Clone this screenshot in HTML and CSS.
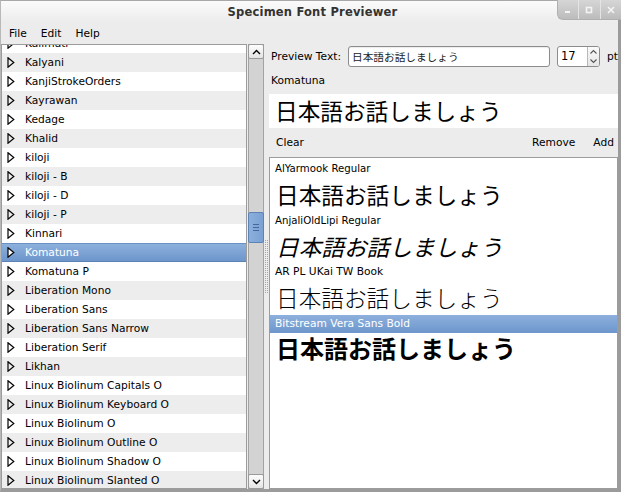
FILE: index.html
```html
<!DOCTYPE html>
<html>
<head>
<meta charset="utf-8">
<link rel="stylesheet" href="styles.css">
</head>
<body>
<div class="window">
  <div class="titlebar">
    <span class="title">Specimen Font Previewer</span>
    <div class="wm">
      <div class="wm-btn"><svg width="8" height="8" viewBox="0 0 8 8"><rect x="1" y="5" width="5" height="2" fill="#f4f4f4"/></svg></div>
      <div class="wm-btn"><svg width="8" height="8" viewBox="0 0 8 8"><rect x="1.5" y="1.5" width="5" height="5" fill="none" stroke="#f4f4f4" stroke-width="1.6"/></svg></div>
      <div class="wm-btn"><svg width="8" height="8" viewBox="0 0 8 8"><path d="M1 1L7 7M7 1L1 7" stroke="#f4f4f4" stroke-width="1.6"/></svg></div>
    </div>
  </div>
  <div class="menubar">
    <span class="menu">File</span><span class="menu">Edit</span><span class="menu">Help</span>
  </div>
  <div class="main">
    <div class="fontlist">
      <div class="rows">
        <div class="row"><svg class="tri" width="8" height="11" viewBox="0 0 8 11"><path d="M1 0.8L6.8 5.5L1 10.2Z" fill="none" stroke="#000" stroke-width="1.2"/></svg><span>Kalimati</span></div>
        <div class="row alt"><svg class="tri" width="8" height="11" viewBox="0 0 8 11"><path d="M1 0.8L6.8 5.5L1 10.2Z" fill="none" stroke="#000" stroke-width="1.2"/></svg><span>Kalyani</span></div>
        <div class="row"><svg class="tri" width="8" height="11" viewBox="0 0 8 11"><path d="M1 0.8L6.8 5.5L1 10.2Z" fill="none" stroke="#000" stroke-width="1.2"/></svg><span>KanjiStrokeOrders</span></div>
        <div class="row alt"><svg class="tri" width="8" height="11" viewBox="0 0 8 11"><path d="M1 0.8L6.8 5.5L1 10.2Z" fill="none" stroke="#000" stroke-width="1.2"/></svg><span>Kayrawan</span></div>
        <div class="row"><svg class="tri" width="8" height="11" viewBox="0 0 8 11"><path d="M1 0.8L6.8 5.5L1 10.2Z" fill="none" stroke="#000" stroke-width="1.2"/></svg><span>Kedage</span></div>
        <div class="row alt"><svg class="tri" width="8" height="11" viewBox="0 0 8 11"><path d="M1 0.8L6.8 5.5L1 10.2Z" fill="none" stroke="#000" stroke-width="1.2"/></svg><span>Khalid</span></div>
        <div class="row"><svg class="tri" width="8" height="11" viewBox="0 0 8 11"><path d="M1 0.8L6.8 5.5L1 10.2Z" fill="none" stroke="#000" stroke-width="1.2"/></svg><span>kiloji</span></div>
        <div class="row alt"><svg class="tri" width="8" height="11" viewBox="0 0 8 11"><path d="M1 0.8L6.8 5.5L1 10.2Z" fill="none" stroke="#000" stroke-width="1.2"/></svg><span>kiloji - B</span></div>
        <div class="row"><svg class="tri" width="8" height="11" viewBox="0 0 8 11"><path d="M1 0.8L6.8 5.5L1 10.2Z" fill="none" stroke="#000" stroke-width="1.2"/></svg><span>kiloji - D</span></div>
        <div class="row alt"><svg class="tri" width="8" height="11" viewBox="0 0 8 11"><path d="M1 0.8L6.8 5.5L1 10.2Z" fill="none" stroke="#000" stroke-width="1.2"/></svg><span>kiloji - P</span></div>
        <div class="row"><svg class="tri" width="8" height="11" viewBox="0 0 8 11"><path d="M1 0.8L6.8 5.5L1 10.2Z" fill="none" stroke="#000" stroke-width="1.2"/></svg><span>Kinnari</span></div>
        <div class="row sel"><svg class="tri" width="8" height="11" viewBox="0 0 8 11"><path d="M1 0.8L6.8 5.5L1 10.2Z" fill="#fff" stroke="#000" stroke-width="1.2"/></svg><span>Komatuna</span></div>
        <div class="row"><svg class="tri" width="8" height="11" viewBox="0 0 8 11"><path d="M1 0.8L6.8 5.5L1 10.2Z" fill="none" stroke="#000" stroke-width="1.2"/></svg><span>Komatuna P</span></div>
        <div class="row alt"><svg class="tri" width="8" height="11" viewBox="0 0 8 11"><path d="M1 0.8L6.8 5.5L1 10.2Z" fill="none" stroke="#000" stroke-width="1.2"/></svg><span>Liberation Mono</span></div>
        <div class="row"><svg class="tri" width="8" height="11" viewBox="0 0 8 11"><path d="M1 0.8L6.8 5.5L1 10.2Z" fill="none" stroke="#000" stroke-width="1.2"/></svg><span>Liberation Sans</span></div>
        <div class="row alt"><svg class="tri" width="8" height="11" viewBox="0 0 8 11"><path d="M1 0.8L6.8 5.5L1 10.2Z" fill="none" stroke="#000" stroke-width="1.2"/></svg><span>Liberation Sans Narrow</span></div>
        <div class="row"><svg class="tri" width="8" height="11" viewBox="0 0 8 11"><path d="M1 0.8L6.8 5.5L1 10.2Z" fill="none" stroke="#000" stroke-width="1.2"/></svg><span>Liberation Serif</span></div>
        <div class="row alt"><svg class="tri" width="8" height="11" viewBox="0 0 8 11"><path d="M1 0.8L6.8 5.5L1 10.2Z" fill="none" stroke="#000" stroke-width="1.2"/></svg><span>Likhan</span></div>
        <div class="row"><svg class="tri" width="8" height="11" viewBox="0 0 8 11"><path d="M1 0.8L6.8 5.5L1 10.2Z" fill="none" stroke="#000" stroke-width="1.2"/></svg><span>Linux Biolinum Capitals O</span></div>
        <div class="row alt"><svg class="tri" width="8" height="11" viewBox="0 0 8 11"><path d="M1 0.8L6.8 5.5L1 10.2Z" fill="none" stroke="#000" stroke-width="1.2"/></svg><span>Linux Biolinum Keyboard O</span></div>
        <div class="row"><svg class="tri" width="8" height="11" viewBox="0 0 8 11"><path d="M1 0.8L6.8 5.5L1 10.2Z" fill="none" stroke="#000" stroke-width="1.2"/></svg><span>Linux Biolinum O</span></div>
        <div class="row alt"><svg class="tri" width="8" height="11" viewBox="0 0 8 11"><path d="M1 0.8L6.8 5.5L1 10.2Z" fill="none" stroke="#000" stroke-width="1.2"/></svg><span>Linux Biolinum Outline O</span></div>
        <div class="row"><svg class="tri" width="8" height="11" viewBox="0 0 8 11"><path d="M1 0.8L6.8 5.5L1 10.2Z" fill="none" stroke="#000" stroke-width="1.2"/></svg><span>Linux Biolinum Shadow O</span></div>
        <div class="row alt"><svg class="tri" width="8" height="11" viewBox="0 0 8 11"><path d="M1 0.8L6.8 5.5L1 10.2Z" fill="none" stroke="#000" stroke-width="1.2"/></svg><span>Linux Biolinum Slanted O</span></div>
      </div>
    </div>
    <div class="vscroll">
      <div class="sbtn"><svg width="9" height="6" viewBox="0 0 9 6"><path d="M1 5L4.5 1.5L8 5" fill="none" stroke="#000" stroke-width="1.4"/></svg></div>
      <div class="thumb"><span class="grip"></span><span class="grip"></span><span class="grip"></span></div>
      <div class="trough-fill"></div>
      <div class="sbtn"><svg width="9" height="6" viewBox="0 0 9 6"><path d="M1 1L4.5 4.5L8 1" fill="none" stroke="#000" stroke-width="1.4"/></svg></div>
    </div>
    <div class="handle"><div class="dots"></div></div>
    <div class="right">
      <div class="toprow">
        <span class="lbl">Preview Text:</span>
        <div class="entry">日本語お話しましょう</div>
        <div class="spin">
          <span class="spin-val">17</span>
          <div class="spin-btns">
            <svg width="9" height="6" viewBox="0 0 9 6"><path d="M1.5 4.5L4.5 1.5L7.5 4.5" fill="none" stroke="#555" stroke-width="1.1"/></svg>
            <svg width="9" height="6" viewBox="0 0 9 6"><path d="M1.5 1.5L4.5 4.5L7.5 1.5" fill="none" stroke="#555" stroke-width="1.1"/></svg>
          </div>
        </div>
        <span class="pt">pt</span>
      </div>
      <div class="curname">Komatuna</div>
      <div class="curpreview">日本語お話しましょう</div>
      <div class="btnrow">
        <span class="fbtn">Clear</span>
        <span class="spacer"></span>
        <span class="fbtn">Remove</span>
        <span class="fbtn">Add</span>
      </div>
      <div class="speclist">
        <div class="spec-label small">AlYarmook Regular</div>
        <div class="spec-text">日本語お話しましょう</div>
        <div class="spec-label small">AnjaliOldLipi Regular</div>
        <div class="spec-text italic">日本語お話しましょう</div>
        <div class="spec-label">AR PL UKai TW Book</div>
        <div class="spec-text kai">日本語お話しましょう</div>
        <div class="spec-label sel">Bitstream Vera Sans Bold</div>
        <div class="spec-text bold">日本語お話しましょう</div>
      </div>
    </div>
  </div>
</div>
</body>
</html>
```

FILE: styles.css
```css
* { box-sizing: border-box; }
html, body { margin: 0; padding: 0; }
body {
  width: 621px;
  height: 492px;
  overflow: hidden;
  background: #ececec;
  font-family: "DejaVu Sans", "Noto Sans CJK JP", sans-serif;
  font-size: 10.67px;
  color: #000;
}
.window {
  width: 621px;
  height: 492px;
  border-right: 3px solid #9b9b9b;
  border-bottom: 3px solid #9b9b9b;
  border-top: 1px solid #a8a8a8;
  border-left: 1px solid #b8b8b8;
  background: #ececec;
  display: flex;
  flex-direction: column;
}
.titlebar {
  height: 21px;
  position: relative;
  background: linear-gradient(#fbfbfb, #ececec);
  display: flex;
  align-items: center;
  justify-content: center;
  padding-left: 6px;
}
.title {
  font-weight: bold;
  font-size: 11.5px;
  color: #333;
  letter-spacing: 0.2px;
}
.wm {
  position: absolute;
  right: -3px;
  top: -1px;
  height: 20px;
  width: 64px;
  display: flex;
  background: linear-gradient(#d6d6d6, #bcbcbc);
  border-bottom-left-radius: 6px;
  border-left: 1px solid #b0b0b0;
  border-bottom: 1px solid #b0b0b0;
}
.wm-btn {
  flex: 1;
  display: flex;
  align-items: center;
  justify-content: center;
  border-left: 1px solid #e4e4e4;
}
.wm-btn:first-child { border-left: none; }
.menubar {
  height: 21px;
  display: flex;
  align-items: center;
  padding-left: 1px;
  padding-top: 2px;
}
.menu {
  padding: 0 7px;
  line-height: 16px;
}
.main {
  flex: 1;
  display: flex;
  padding-top: 1px;
  min-height: 0;
}
.fontlist {
  width: 246px;
  border: 1px solid #9c9c9c;
  background: #fff;
  overflow: hidden;
}
.rows { margin-top: -11px; }
.row {
  height: 19px;
  display: flex;
  align-items: center;
  padding-left: 5px;
  white-space: nowrap;
  background: #fff;
}
.row.alt { background: #ededed; }
.row.sel {
  background: linear-gradient(#8db0dd, #6d96cb);
  color: #fff;
  border-top: 1px solid #6a8fc2;
  border-bottom: 1px solid #5d82b6;
}
.row span { margin-left: 10px; }
.tri { flex: none; }
.vscroll {
  width: 16px;
  margin-left: 1px;
  background: #d3d3d3;
  border: 1px solid #a3a3a3;
  display: flex;
  flex-direction: column;
}
.sbtn {
  height: 15px;
  background: linear-gradient(#fdfdfd, #e4e4e4);
  border: 1px solid #9a9a9a;
  border-radius: 2px;
  margin: 0 -1px;
  display: flex;
  align-items: center;
  justify-content: center;
}
.sbtn:first-child { margin-top: -1px; }
.sbtn:last-child { margin-bottom: -1px; }
.thumb {
  margin: 153px -1px 0;
  height: 31px;
  background: linear-gradient(90deg, #8cb0dc, #7aa1d3);
  border: 1px solid #5d82b6;
  border-radius: 2px;
  display: flex;
  flex-direction: column;
  align-items: center;
  justify-content: center;
  gap: 2px;
}
.grip {
  width: 6px;
  height: 1px;
  background: #45679a;
}
.trough-fill { flex: 1; }
.handle {
  width: 5px;
  display: flex;
  align-items: center;
  justify-content: center;
}
.dots {
  width: 4px;
  height: 54px;
  background-image: radial-gradient(circle at 0.5px 0.5px, #a6a6a6 0.8px, transparent 0.9px);
  background-size: 2px 2px;
}
.right {
  width: 349px;
  display: flex;
  flex-direction: column;
  min-height: 0;
}
.toprow {
  height: 23px;
  padding-top: 2px;
  display: flex;
  align-items: center;
}
.lbl { margin-left: 2px; width: 77px; }
.entry {
  width: 202px;
  height: 21px;
  background: #fff;
  border: 1px solid #8c8c8c;
  border-radius: 3px;
  box-shadow: inset 0 1px 1px rgba(0,0,0,0.08);
  padding-left: 3px;
  line-height: 19px;
  font-family: "Noto Sans CJK JP", sans-serif;
  font-size: 10.67px;
  color: #222;
}
.spin {
  margin-left: 7px;
  width: 43px;
  height: 21px;
  background: #fff;
  border: 1px solid #8c8c8c;
  border-radius: 3px;
  display: flex;
}
.spin-val {
  flex: 1;
  padding-left: 3px;
  line-height: 19px;
  font-size: 11.5px;
}
.spin-btns {
  width: 12px;
  border-left: 1px solid #b8b8b8;
  background: linear-gradient(#fafafa, #e6e6e6);
  display: flex;
  flex-direction: column;
  align-items: center;
  justify-content: space-around;
  border-radius: 0 2px 2px 0;
}
.pt { margin-left: 7px; }
.curname {
  padding: 6px 0 5px 2px;
  line-height: 16px;
}
.curpreview {
  height: 34px;
  background: #fff;
  line-height: 34px;
  padding-left: 6px;
  font-family: "Noto Sans CJK JP", sans-serif;
  font-size: 22.67px;
  white-space: nowrap;
}
.btnrow {
  height: 29px;
  display: flex;
  align-items: center;
  padding: 0 4px 0 7px;
}
.spacer { flex: 1; }
.fbtn { padding: 0; }
.fbtn + .fbtn { margin-left: 18px; }
.speclist {
  flex: 1;
  background: #fff;
  border: 1px solid #9c9c9c;
  padding-top: 2px;
  overflow: hidden;
}
.spec-label {
  height: 18px;
  line-height: 18px;
  padding-left: 5px;
  white-space: nowrap;
}
.spec-label.small { font-size: 10.2px; }
.spec-label.sel {
  background: linear-gradient(#8db0dd, #6d96cb);
  color: #fff;
}
.spec-text {
  height: 33.5px;
  line-height: 33.5px;
  padding-left: 6px;
  font-family: "Noto Sans CJK JP", sans-serif;
  font-size: 22.67px;
  white-space: nowrap;
}
.spec-text.italic { font-style: italic; }
.spec-text.kai { font-weight: 300; }
.spec-text.bold { font-weight: bold; font-size: 24px; line-height: 29px; }
```
